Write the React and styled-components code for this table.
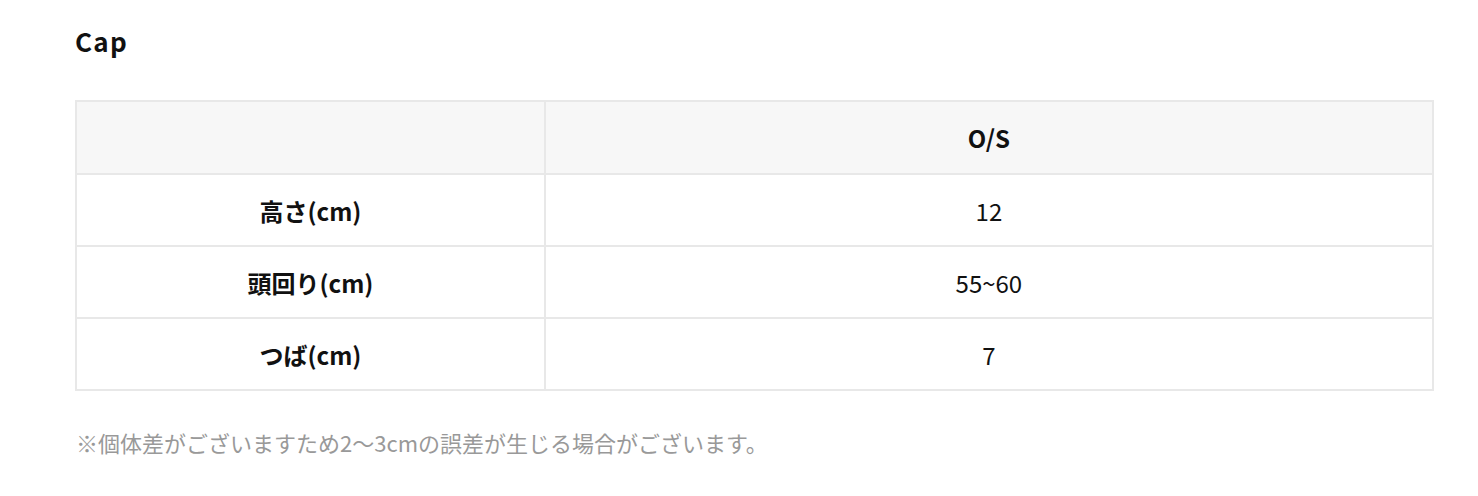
import styled, { createGlobalStyle } from 'styled-components';

const rows = [
  { label: '高さ(cm)', value: '12' },
  { label: '頭回り(cm)', value: '55~60' },
  { label: 'つば(cm)', value: '7' },
];

const App = () => (
  <>
    <GlobalStyle />
    <Page>
      <Title>Cap</Title>
      <Table>
        <thead>
          <tr>
            <HeadCell />
            <HeadCell>O/S</HeadCell>
          </tr>
        </thead>
        <tbody>
          {rows.map((r) => (
            <tr key={r.label}>
              <LabelCell>{r.label}</LabelCell>
              <Cell>{r.value}</Cell>
            </tr>
          ))}
        </tbody>
      </Table>
      <Note>※個体差がございますため2〜3cmの誤差が生じる場合がございます。</Note>
    </Page>
  </>
);

const GlobalStyle = createGlobalStyle`
  body {
    margin: 0;
    background: #fff;
    color: #111;
    font-family: "Noto Sans CJK JP", "Noto Sans", sans-serif;
  }
`;

const Page = styled.div`
  padding: 22px 44px 0 75px;
`;

const Title = styled.h2`
  margin: 0 0 40px;
  font-size: 26px;
  font-weight: 700;
  letter-spacing: 0.05em;
  line-height: 38px;
`;

const Table = styled.table`
  width: 100%;
  border-collapse: collapse;
  border: 2px solid #e8e8e8;
  table-layout: fixed;

  th:first-child,
  td:first-child {
    width: 34.4%;
  }
`;

const HeadCell = styled.th`
  height: 71px;
  padding: 0;
  background: #f7f7f7;
  border: 2px solid #e8e8e8;
  font-size: 24px;
  font-weight: 700;
  text-align: center;
`;

const Cell = styled.td`
  height: 70px;
  padding: 0;
  border: 2px solid #e8e8e8;
  font-size: 24px;
  font-weight: 400;
  text-align: center;
`;

const LabelCell = styled(Cell)`
  font-weight: 700;
`;

const Note = styled.p`
  margin: 35px 0 0 1px;
  color: #999;
  font-size: 22px;
  line-height: 32px;
`;

export default App;
